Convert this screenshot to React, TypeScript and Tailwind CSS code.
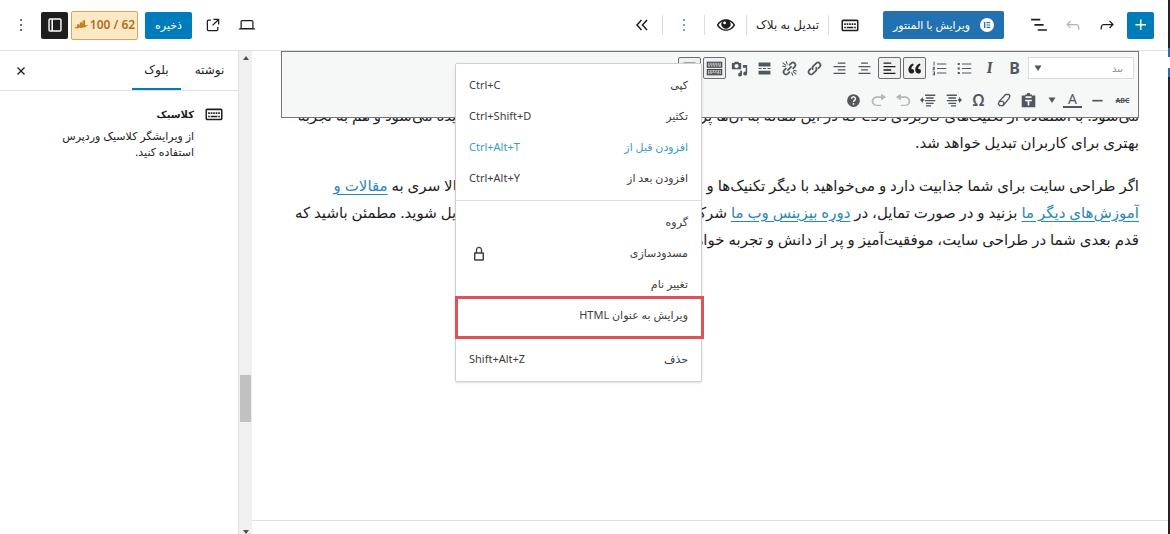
import { useState } from 'react';
import type { ReactNode } from 'react';
import clsx from 'clsx';

const PATHS = {
  plus: 'M11 12.5V17.5H12.5V12.5H17.5V11H12.5V6H11V11H6V12.5H11Z',
  more: 'M13 19h-2v-2h2v2zm0-6h-2v-2h2v2zm0-6h-2V5h2v2z',
  undo: 'M18.3 11.7c-.6-.6-1.4-.9-2.3-.9H6.7l2.9-3.3-1.1-1-4.5 5L8.5 16l1-1-2.7-2.7H16c.5 0 .9.2 1.3.5 1 1 1 3.4 1 4.5v.3h1.5v-.2c0-1.5 0-4.3-1.5-5.7z',
  redo: 'M15.6 6.5l-1.1 1 2.9 3.3H8c-.9 0-1.7.3-2.3.9-1.4 1.5-1.4 4.2-1.4 5.6v.2h1.5v-.3c0-1.1 0-3.5 1-4.5.3-.3.7-.5 1.3-.5h9.2L14.5 15l1.1 1.1 4.6-4.6-4.6-5z',
  listView: 'M2.500 4.500h11v2h-11v-2Zm4 6.300h11v2h-11v-2ZM21.500 17h-11v2h11v-2Z',
  external:
    'M19.5 4.5h-7V6h4.44l-5.97 5.97 1.06 1.06L18 7.06v4.44h1.5v-7Zm-13 1a2 2 0 0 0-2 2v10a2 2 0 0 0 2 2h10a2 2 0 0 0 2-2v-3H17v3a.5.5 0 0 1-.5.5h-10a.5.5 0 0 1-.5-.5v-10a.5.5 0 0 1 .5-.5h3V5.5h-3Z',
  laptop:
    'M20.5 16h-.7V8c0-1.1-.9-2-2-2H6.2c-1.1 0-2 .9-2 2v8h-.7c-.8 0-1.5.7-1.5 1.5h20c0-.8-.7-1.5-1.5-1.5zM5.7 8c0-.3.2-.5.5-.5h11.6c.3 0 .5.2.5.5v7.6H5.7V8z',
  lock: 'M17 10h-1.2V7c0-2.1-1.7-3.8-3.8-3.8S8.2 4.900 8.2 7v3H7c-.6 0-1 .4-1 1v8c0 .6.4 1 1 1h10c.6 0 1-.4 1-1v-8c0-.6-.4-1-1-1zM9.800 7c0-1.200 1-2.200 2.200-2.200s2.200 1 2.200 2.200v3H9.800V7zM7.700 11.700h8.600v6.600H7.700v-6.600z',
  close:
    'M12 13.06l3.712 3.713 1.061-1.06L13.061 12l3.712-3.712-1.06-1.06L12 10.938 8.288 7.227l-1.061 1.06L10.939 12l-3.712 3.712 1.06 1.061L12 13.061z',
  keyboard:
    'M20 5.500H4c-1.300 0-2.200.9-2.200 2.200v9.600c0 1.300.9 2.200 2.200 2.200h16c1.300 0 2.200-.9 2.200-2.200V7.700c0-1.300-.9-2.200-2.200-2.200zm.4 11.600c0 .3-.2.500-.5.500H4.100c-.3 0-.5-.2-.5-.5V7.900c0-.3.2-.5.5-.5h15.800c.3 0 .5.200.5.500v9.200zM10 10H8v2h2v-2zm-5 2h2v-2H5v2zm8-2h-2v2h2v-2zm-5 6h8v-2H8v2zm6-4h2v-2h-2v2zm3 0h2v-2h-2v2zm0 4h2v-2h-2v2zM5 16h2v-2H5v2z',
  sidebar: 'M6 4h12a2 2 0 0 1 2 2v12a2 2 0 0 1-2 2H6a2 2 0 0 1-2-2V6a2 2 0 0 1 2-2zm-.3 1.700v12.600h2V5.700h-2zm3.900 0v12.600h8.700V5.700H9.600z',
  eye: 'M12 5C6.800 5 2.800 8.200 1 12c1.800 3.800 5.800 7 11 7s9.200-3.200 11-7c-1.800-3.800-5.800-7-11-7zm0 12.400c-4 0-7.200-2.200-8.900-5.400 1-1.900 2.500-3.400 4.400-4.300a5.500 5.500 0 1 0 9 0c1.900.9 3.400 2.400 4.400 4.300-1.700 3.200-4.900 5.400-8.900 5.400zM10.300 7.800a1.700 1.700 0 1 1 0 3.400 1.700 1.700 0 0 1 0-3.400z',
};

function Icon({ name, size = 20 }: { name: keyof typeof PATHS; size?: number }) {
  return (
    <svg
      viewBox="0 0 24 24"
      width={size}
      height={size}
      fill="currentColor"
      fillRule="evenodd"
      className="shrink-0"
      aria-hidden="true"
    >
      <path d={PATHS[name]} />
    </svg>
  );
}

interface IconButtonProps {
  label: string;
  className?: string;
  children: ReactNode;
}

function IconButton({ label, className, children }: IconButtonProps) {
  return (
    <button
      type="button"
      aria-label={label}
      className={clsx('flex h-[27px] w-[27px] shrink-0 items-center justify-center rounded-xs', className)}
    >
      {children}
    </button>
  );
}

function Divider() {
  return <div className="h-5 w-px shrink-0 bg-[#dcdcdc]" />;
}

function TopBar() {
  return (
    <header className="flex h-[51px] shrink-0 items-center justify-between border-b border-[#e0e0e0] pr-3.5 pl-[7px]">
      <div className="flex items-center">
        <div className="flex items-center gap-[7px]">
          <IconButton label="افزودن بلوک" className="bg-[#007cba] text-white">
            <Icon name="plus" size={22} />
          </IconButton>
          <IconButton label="از نو">
            <Icon name="redo" />
          </IconButton>
          <IconButton label="بازگردانی" className="text-[#b5b5b5]">
            <Icon name="undo" />
          </IconButton>
          <IconButton label="نمای فهرست">
            <Icon name="listView" />
          </IconButton>
        </div>
        <button
          type="button"
          className="mr-[21px] flex h-7 w-[121px] items-center justify-center gap-2.5 rounded-xs bg-[#2271b1] text-[11px] text-white"
        >
          <svg viewBox="0 0 16 16" className="h-3.5 w-3.5" aria-hidden="true">
            <circle cx="8" cy="8" r="8" fill="#fff" />
            <path d="M4.500 4.500h1.600v7H4.500zM7.400 4.500h4.200v1.400H7.400zM7.400 7.300h4.200v1.400H7.400zM7.400 10.100h4.200v1.400H7.400z" fill="#2271b1" />
          </svg>
          ویرایش با المنتور
        </button>
        <div className="mr-5 flex items-center gap-[7px]">
          <IconButton label="کلاسیک">
            <Icon name="keyboard" />
          </IconButton>
          <Divider />
          <button type="button" className="px-0.5 text-xs whitespace-nowrap">
            تبدیل به بلاک
          </button>
          <Divider />
          <IconButton label="پیش‌نمایش">
            <Icon name="eye" />
          </IconButton>
          <Divider />
          <IconButton label="تنظیمات" className="text-[#007cba]">
            <Icon name="more" />
          </IconButton>
          <Divider />
          <IconButton label="بستن نوار ابزار">
            <svg viewBox="0 0 12 12" className="h-3 w-3" fill="none" stroke="currentColor" strokeWidth="1.500" aria-hidden="true">
              <path d="M5.500 1L1 6l4.500 5M11 1L6.500 6l4.500 5" />
            </svg>
          </IconButton>
        </div>
      </div>

      <div className="flex items-center gap-[7px]">
        <IconButton label="نمایش">
          <Icon name="laptop" />
        </IconButton>
        <IconButton label="مشاهده نوشته">
          <Icon name="external" />
        </IconButton>
        <button type="button" className="h-[27px] w-[47px] rounded-xs bg-[#007cba] text-[11px] text-white">
          ذخیره
        </button>
        <div className="flex items-center gap-[3px]">
          <button
            type="button"
            className="flex h-[29px] w-[67px] items-center justify-center gap-0.5 rounded-xs border border-[#d9a55a] bg-[#ffe8c4] text-xs font-semibold text-[#ad6f1c]"
          >
            <span className="whitespace-nowrap">62 / 100</span>
            <svg viewBox="0 0 14 10" className="h-2.5 w-3.5" fill="#c77f1a" aria-hidden="true">
              <path d="M0 8l3-1.500V4.500l2.200-.5v1.500l.6-.4V2.700L8 2v2l.5-.4V.8L11 0v5.200l3-.2-3 2.500H9.500V7L8 8H6.500l-.8-.6L3.500 8.500z" />
            </svg>
          </button>
          <IconButton label="تنظیمات نوشته" className="bg-[#1e1e1e] text-white">
            <Icon name="sidebar" />
          </IconButton>
        </div>
        <IconButton label="گزینه‌ها">
          <Icon name="more" />
        </IconButton>
      </div>
    </header>
  );
}

// Small glyphs of the classic editor toolbar, drawn on a 20px grid
function Glyph({ children }: { children: ReactNode }) {
  return (
    <svg viewBox="0 0 20 20" className="h-[17px] w-[17px]" fill="currentColor" aria-hidden="true">
      {children}
    </svg>
  );
}

const arrowUndo = 'M12 5H7V2L1 6l6 4V7h5c2.200 0 4 1.800 4 4s-1.800 4-4 4H7v1.500h5c3.300 0 6-2.400 6-5.500s-2.700-6-6-6z';

const topTools = [
  { label: 'پررنگ', icon: <span className="text-base font-bold">B</span> },
  { label: 'کج', icon: <span className="font-serif text-base font-bold italic">I</span> },
  {
    label: 'فهرست نشانه‌دار',
    icon: (
      <Glyph>
        <path d="M7 4h11v1.400H7zM7 9.300h11v1.400H7zM7 14.600h11V16H7zM2 3.500h2.500V6H2zM2 8.800h2.500v2.500H2zM2 14h2.500v2.500H2z" />
      </Glyph>
    ),
  },
  {
    label: 'فهرست شماره‌دار',
    icon: (
      <Glyph>
        <path d="M7 4h11v1.200H7zM7 9.300h11v1.200H7zM7 14.600h11v1.200H7zM3 2h1.200v4.500H3zM2 8h2.500v2.500H3.200v.6h1.500v1H2V9.600h1.500V9H2zM2 13.500h2.700v4.300H2v-1h1.600v-.7H2.500v-.9h1.100v-.7H2z" />
      </Glyph>
    ),
  },
  {
    label: 'نقل قول',
    active: true,
    icon: (
      <Glyph>
        <path
          className="text-[#1e1e1e]"
          fill="currentColor"
          d="M9.490 13.220c0-.74-.2-1.380-.61-1.900-.62-.78-1.830-.88-2.530-.72-.29-1.650 1.110-3.750 2.920-4.650L7.880 4c-2.730 1.300-5.420 4.280-4.960 8.050C3.210 14.430 4.590 16 6.540 16c.85 0 1.560-.25 2.120-.75s.83-1.180.83-2.030zm8.050 0c0-.74-.2-1.380-.61-1.900-.62-.78-1.830-.88-2.530-.72-.29-1.650 1.110-3.750 2.920-4.650L15.930 4c-2.730 1.300-5.410 4.280-4.950 8.050.28 2.380 1.660 3.950 3.610 3.950.85 0 1.560-.25 2.120-.75s.83-1.180.83-2.030z"
        />
      </Glyph>
    ),
  },
  {
    label: 'تراز چپ',
    active: true,
    icon: (
      <Glyph>
        <path className="text-[#1e1e1e]" fill="currentColor" d="M3 3h9v1.500H3zM3 7h14v1.500H3zM3 11h9v1.500H3zM3 15h14v1.500H3z" />
      </Glyph>
    ),
  },
  {
    label: 'تراز وسط',
    icon: (
      <Glyph>
        <path d="M6 3h8v1.400H6zM3 7h14v1.400H3zM6 11h8v1.400H6zM3 15h14v1.400H3z" />
      </Glyph>
    ),
  },
  {
    label: 'تراز راست',
    icon: (
      <Glyph>
        <path d="M8 3h9v1.400H8zM3 7h14v1.400H3zM8 11h9v1.400H8zM3 15h14v1.400H3z" />
      </Glyph>
    ),
  },
  {
    label: 'پیوند',
    icon: (
      <Glyph>
        <g fill="none" stroke="currentColor" strokeWidth="2">
          <path d="M8.500 11.500a3 3 0 0 1 0-4.200l3.700-3.700a3 3 0 0 1 4.200 4.200L14 10.200" />
          <path d="M11.500 8.500a3 3 0 0 1 0 4.200l-3.700 3.700a3 3 0 0 1-4.200-4.200L6 9.800" />
        </g>
      </Glyph>
    ),
  },
  {
    label: 'حذف پیوند',
    icon: (
      <Glyph>
        <g fill="none" stroke="currentColor" strokeWidth="2">
          <path d="M9.500 6.300l2.700-2.700a3 3 0 0 1 4.200 4.200l-2.700 2.700M10.500 13.700l-2.700 2.700a3 3 0 0 1-4.200-4.200l2.700-2.700M7.500 12.500l5-5" />
          <path strokeWidth="1.200" d="M2 3l4 3.500M6 1.500l1.500 4M1.500 7l4 1M18 17l-4-3.500M14 18.500l-1.500-4M18.500 13l-4-1" />
        </g>
      </Glyph>
    ),
  },
  {
    label: 'ادامه مطلب',
    icon: (
      <Glyph>
        <path d="M3 3h14v4.500H3zM3 9.300h3.500v1.400H3zM8.200 9.300h3.500v1.400H8.200zM13.500 9.300H17v1.400h-3.500zM3 12.500h14V17H3z" />
      </Glyph>
    ),
  },
  {
    label: 'افزودن رسانه',
    icon: (
      <Glyph>
        <path
          fillRule="evenodd"
          d="M1 3.500h2.500L4.500 2h4l1 1.500H12V11H1zM6.500 4.800a2.400 2.400 0 1 0 0 4.800 2.400 2.400 0 0 0 0-4.800zM14 6h5v10a2.300 2.300 0 1 1-1.700-2.200V9H14zM10.500 12.500H13V17a2.300 2.300 0 1 1-1.700-2.200z"
        />
      </Glyph>
    ),
  },
  {
    label: 'نوار ابزار دوم',
    active: true,
    icon: (
      <Glyph>
        <path fill="#b5b7b9" d="M1 2h18v7H1zM1 10.500h18V18H1z" />
        <path
          fill="none"
          stroke="#3c4146"
          strokeWidth="1.200"
          d="M1.600 2.600h16.800v6H1.600zM1.600 11.100h16.800v6.300H1.600z"
        />
        <path
          fill="#3c4146"
          d="M3.500 4h1.500v1.300H3.500zM6.500 4H8v1.300H6.500zM9.500 4H11v1.300H9.500zM12.500 4H14v1.300h-1.500zM15.200 4h1.500v1.300h-1.500zM4.500 6.200H6v1.300H4.500zM7.500 6.200H9v1.300H7.500zM10.500 6.200H12v1.300h-1.500zM13.500 6.200H15v1.300h-1.500zM3.500 12.500h1.500v1.300H3.500zM6.500 12.500H8v1.300H6.500zM9.500 12.500H11v1.300H9.500zM12.500 12.500H14v1.300h-1.500zM15.200 12.500h1.500v1.300h-1.500zM3.500 14.900H5v1.300H3.500zM6.500 14.900h7v1.300h-7zM15 14.900h1.700v1.300H15z"
        />
      </Glyph>
    ),
  },
  {
    label: 'تمام صفحه',
    active: true,
    icon: (
      <Glyph>
        <path d="M3 3h14v14H3zM5 6v9h10V6z" fillRule="evenodd" />
      </Glyph>
    ),
  },
];

const bottomTools = [
  {
    label: 'چسباندن به عنوان متن',
    icon: (
      <Glyph>
        <path fillRule="evenodd" d="M2 4h4V3h2a2 2 0 0 1 4 0h2v1h4v14H2zM6.500 5v2h7V5zM6 9v2h3v5h2v-5h3V9z" />
      </Glyph>
    ),
  },
  {
    label: 'پاک کردن قالب‌بندی',
    icon: (
      <Glyph>
        <g fill="none" stroke="currentColor" strokeWidth="1.600" strokeLinejoin="round">
          <path d="M12.500 3h4l1 1.500-1 3-7 8.500H5.500L4 14l1-3z" />
          <path d="M5 11h4l1.500 1.500-1 3.500" />
        </g>
      </Glyph>
    ),
  },
  { label: 'نویسه ویژه', icon: <span className="text-base font-semibold">Ω</span> },
  {
    label: 'افزایش تورفتگی',
    icon: (
      <Glyph>
        <path d="M2 3h12v1.700H2zM4 6.200h9v1.700H4zM2 9.300h12V11H2zM4 12.500h9v1.700H4zM7 15.500h6v1.700H7zM20 9.400L16.500 6v2.400H15v2h1.500V13z" />
      </Glyph>
    ),
  },
  {
    label: 'کاهش تورفتگی',
    icon: (
      <Glyph>
        <path d="M6 3h12v1.700H6zM7 6.200h9v1.700H7zM6 9.300h12V11H6zM7 12.500h9v1.700H7zM7 15.500h6v1.700H7zM0 9.400L3.500 6v2.400H5v2H3.500V13z" />
      </Glyph>
    ),
  },
  {
    label: 'بازگردانی متن',
    disabled: true,
    icon: (
      <Glyph>
        <path d={arrowUndo} />
      </Glyph>
    ),
  },
  {
    label: 'تکرار',
    disabled: true,
    icon: (
      <Glyph>
        <path d={arrowUndo} transform="matrix(-1 0 0 1 20 0)" />
      </Glyph>
    ),
  },
  {
    label: 'راهنما',
    icon: (
      <Glyph>
        <circle cx="10" cy="10" r="7.500" />
        <path d="M7.700 8a2.300 2.300 0 1 1 3.600 1.900c-.9.600-1.300.9-1.300 2" fill="none" stroke="#f6f7f7" strokeWidth="1.700" />
        <circle cx="10" cy="14" r="1.100" fill="#f6f7f7" />
      </Glyph>
    ),
  },
];

interface ToolProps {
  label: string;
  active?: boolean;
  disabled?: boolean;
  children: ReactNode;
}

function Tool({ label, active, disabled, children }: ToolProps) {
  return (
    <button
      type="button"
      aria-label={label}
      disabled={disabled}
      className={clsx(
        'flex h-[22px] w-[23px] shrink-0 items-center justify-center rounded-xs border leading-none',
        active ? 'border-[#6b6e72] bg-[#f0f0f1]' : 'border-transparent',
        disabled ? 'text-[#b4b7ba]' : 'text-[#50575e]'
      )}
    >
      {children}
    </button>
  );
}

function ClassicToolbar() {
  return (
    <div className="relative z-10 flex flex-col gap-2.5 border border-[#757575] bg-[#f6f7f7] px-1 pt-[5px] pb-1.5">
      <div className="flex items-center gap-0.5">
        <div className="relative flex h-[22px] w-[106px] shrink-0">
          <select
            aria-label="قالب"
            className="w-full appearance-none border border-[#dcdcde] bg-white pr-2.5 text-[10px] text-[#8c8f94]"
          >
            <option>بند</option>
          </select>
          <svg viewBox="0 0 8 6" className="absolute top-2 left-1.5 h-1.5 w-2" fill="#50575e" aria-hidden="true">
            <path d="M0.500 0.500h7L4 6z" />
          </svg>
        </div>
        {topTools.map((tool) => (
          <Tool key={tool.label} label={tool.label} active={tool.active}>
            {tool.icon}
          </Tool>
        ))}
      </div>
      <div className="flex items-center gap-0.5">
        <Tool label="خط‌خورده">
          <span className="text-[7px] font-bold line-through">ABC</span>
        </Tool>
        <Tool label="خط افقی">
          <Glyph>
            <path d="M4 9.200h12v2H4z" />
          </Glyph>
        </Tool>
        <div className="flex">
          <Tool label="رنگ متن">
            <span className="border-b-2 border-[#50575e] px-[5px] text-sm leading-[14px]">A</span>
          </Tool>
          <button type="button" aria-label="انتخاب رنگ" className="flex w-[19px] items-center justify-center">
            <svg viewBox="0 0 8 6" className="h-1.5 w-2" fill="#50575e" aria-hidden="true">
              <path d="M0.500 0.500h7L4 6z" />
            </svg>
          </button>
        </div>
        {bottomTools.map((tool) => (
          <Tool key={tool.label} label={tool.label} disabled={tool.disabled}>
            {tool.icon}
          </Tool>
        ))}
      </div>
    </div>
  );
}

function PostLink({ children }: { children: ReactNode }) {
  return (
    <a href="#" className="text-[#2b87b8] underline underline-offset-3">
      {children}
    </a>
  );
}

function PostContent() {
  return (
    <div className="-mt-4 text-[15px] leading-[27px] whitespace-nowrap text-[#1e1e1e]">
      <p>
        می‌شود. با استفاده از تکنیک‌های کاربردی CSS که در این مقاله به آن‌ها پرداختیم، سایت شما هم سریع‌تر و زیباتر دیده می‌شود و هم به تجربه
        <br />
        بهتری برای کاربران تبدیل خواهد شد.
      </p>
      <p className="mt-4">
        اگر طراحی سایت برای شما جذابیت دارد و می‌خواهید با دیگر تکنیک‌ها و ابزارهای آن به خوبی آشنا شوید، همین حالا سری به{' '}
        <PostLink>
          مقالات و
          <br />
          آموزش‌های دیگر ما
        </PostLink>{' '}
        بزنید و در صورت تمایل، در <PostLink>دوره بیزینس وب ما</PostLink> شرکت کنید تا خیلی زود به طراح حرفه‌ای تبدیل شوید. مطمئن باشید که
        <br />
        قدم بعدی شما در طراحی سایت، موفقیت‌آمیز و پر از دانش و تجربه خواهد بود.
      </p>
    </div>
  );
}

const menuSections = [
  [
    { label: 'کپی', shortcut: 'Ctrl+C' },
    { label: 'تکثیر', shortcut: 'Ctrl+Shift+D' },
    { label: 'افزودن قبل از', shortcut: 'Ctrl+Alt+T', highlighted: true },
    { label: 'افزودن بعد از', shortcut: 'Ctrl+Alt+Y' },
  ],
  [
    { label: 'گروه' },
    { label: 'مسدودسازی', locked: true },
    { label: 'تغییر نام' },
    { label: 'ویرایش به عنوان HTML', boxed: true },
  ],
  [{ label: 'حذف', shortcut: 'Shift+Alt+Z' }],
] as { label: string; shortcut?: string; highlighted?: boolean; locked?: boolean; boxed?: boolean }[][];

function BlockMenu() {
  return (
    <div
      role="menu"
      className="absolute top-3 left-[203px] z-20 w-[247px] divide-y divide-[#dcdcdc] rounded-xs border border-[#cfcfcf] bg-white shadow-sm"
    >
      {menuSections.map((section, i) => (
        <div key={i} className="py-1.5">
          {section.map((item) => (
            <button
              key={item.label}
              type="button"
              role="menuitem"
              className={clsx(
                'relative flex h-[31px] w-full items-center justify-between px-[13px] text-[11px]',
                item.highlighted ? 'text-[#3a9bcb]' : 'text-[#3c3c3c]'
              )}
            >
              <span>{item.label}</span>
              {item.shortcut && <span dir="ltr">{item.shortcut}</span>}
              {item.locked && <Icon name="lock" />}
              {item.boxed && <span className="absolute -top-1 -right-[3px] -bottom-2 -left-px border-3 border-[#dd5254]" />}
            </button>
          ))}
        </div>
      ))}
    </div>
  );
}

function Sidebar() {
  const [tab, setTab] = useState('block');
  const tabClass = (name: string) =>
    clsx('border-b-2 text-xs', tab === name ? 'border-[#007cba]' : 'border-transparent');

  return (
    <aside className="w-[238px] shrink-0">
      <div className="flex h-10 items-stretch border-b border-[#e0e0e0]">
        <button type="button" onClick={() => setTab('post')} className={clsx('w-[57px]', tabClass('post'))}>
          نوشته
        </button>
        <button type="button" onClick={() => setTab('block')} className={clsx('w-[49px]', tabClass('block'))}>
          بلوک
        </button>
        <IconButton label="بستن تنظیمات" className="mr-auto ml-[7px] self-center">
          <Icon name="close" />
        </IconButton>
      </div>
      <div className="flex gap-2.5 pt-[13px] pr-3.5">
        <Icon name="keyboard" />
        <div className="w-[140px]">
          <h2 className="text-[10px] leading-5 font-semibold">کلاسیک</h2>
          <p className="mt-1 text-[11px] leading-4">از ویرایشگر کلاسیک وردپرس استفاده کنید.</p>
        </div>
      </div>
    </aside>
  );
}

function ScrollRail() {
  return (
    <div className="flex w-3.5 shrink-0 flex-col items-center border-l border-[#e0e0e0] bg-[#f0f0f0]">
      <svg viewBox="0 0 6 4" className="mt-[5px] h-1 w-1.5" fill="#505050" aria-hidden="true">
        <path d="M3 0l3 4H0z" />
      </svg>
      <div className="grow-[70]" />
      <div className="h-[47px] w-[11px] bg-[#c1c1c1]" />
      <div className="grow-[24]" />
      <svg viewBox="0 0 6 4" className="h-1 w-1.5" fill="#505050" aria-hidden="true">
        <path d="M3 4l3-4H0z" />
      </svg>
    </div>
  );
}

export default function App() {
  return (
    <div dir="rtl" className="flex h-screen overflow-hidden bg-white font-['Noto_Sans','DejaVu_Sans',sans-serif] text-[#1e1e1e]">
      <div className="flex w-0.5 shrink-0 flex-col">
        <div className="h-12 bg-[#1d2327]" />
        <div className="h-[9px] bg-[#2271b1]" />
        <div className="mt-[11px] h-[9px] bg-[#2271b1]" />
        <div className="grow bg-[#1d2327]" />
      </div>
      <div className="flex min-w-0 grow flex-col">
        <TopBar />
        <div className="flex min-h-0 grow">
          <main className="relative flex min-w-0 grow flex-col">
            <div className="grow px-[29px]">
              <ClassicToolbar />
              <PostContent />
            </div>
            <div className="h-3.5 border-t border-[#e0e0e0]" />
            <BlockMenu />
          </main>
          <ScrollRail />
          <Sidebar />
        </div>
      </div>
    </div>
  );
}
